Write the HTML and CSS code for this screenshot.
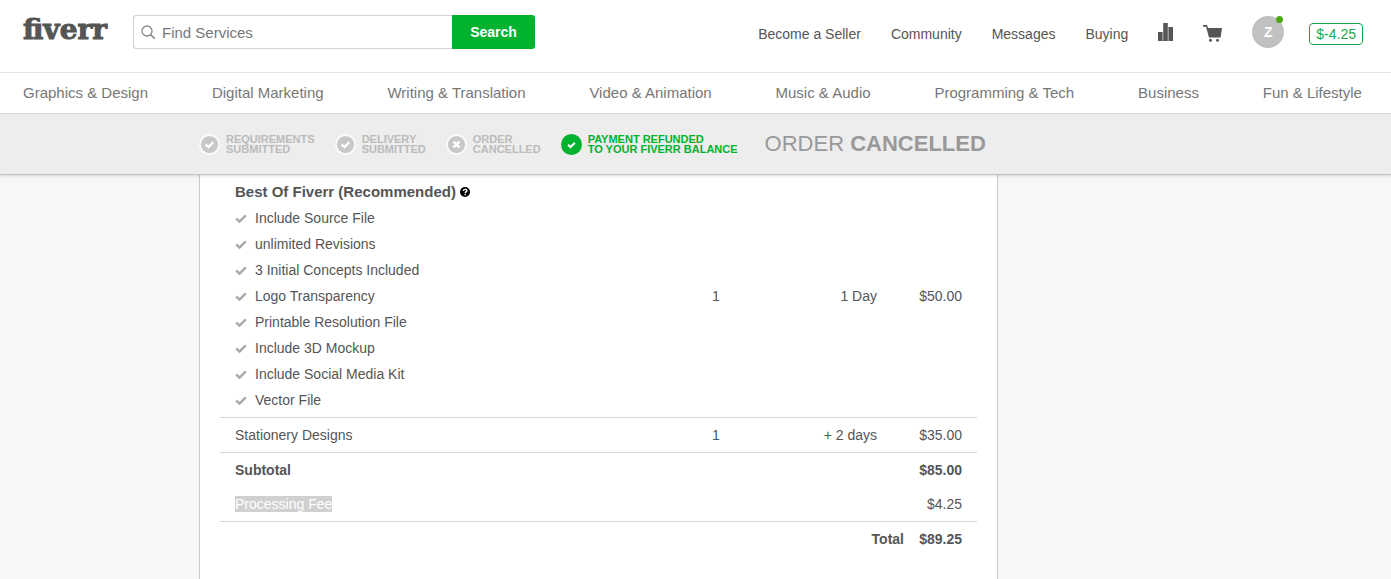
FILE: index.html
```html
<!DOCTYPE html>
<html lang="en">
<head>
    <meta charset="UTF-8">
    <meta name="viewport" content="width=device-width, initial-scale=1.0">
    <title>Fiverr - Order Cancelled</title>
    <link rel="stylesheet" href="styles.css">
</head>
<body>
    <!-- Shared icons -->
    <svg class="icon-defs" aria-hidden="true">
        <symbol id="tick" viewBox="0 0 12 10">
            <path d="M1.2 5.500l3.300 3.100L10.800 2.300" fill="none" stroke="currentColor" stroke-width="2.500"/>
        </symbol>
        <symbol id="done" viewBox="0 0 20 20">
            <circle cx="10" cy="10" r="10" fill="#fafafa"/>
            <circle cx="10" cy="10" r="8.2" fill="currentColor"/>
            <path d="M6.4 10l2.6 2.5 4.6-4.6" fill="none" stroke="#fff" stroke-width="2.2"/>
        </symbol>
        <symbol id="cancelled" viewBox="0 0 20 20">
            <circle cx="10" cy="10" r="10" fill="#fafafa"/>
            <circle cx="10" cy="10" r="8.2" fill="currentColor"/>
            <path d="M7.2 7.2l5.6 5.6M12.8 7.2l-5.6 5.6" fill="none" stroke="#fff" stroke-width="2.2"/>
        </symbol>
    </svg>

    <header class="header">
        <a href="#" class="logo">fiverr</a>

        <form class="search">
            <label class="search-box">
                <svg class="search-icon" viewBox="0 0 15 15" aria-hidden="true">
                    <circle cx="6" cy="6" r="5" fill="none" stroke="#888" stroke-width="1.3"/>
                    <path d="M9.6 9.6l4.2 4.2" stroke="#888" stroke-width="1.6"/>
                </svg>
                <input type="text" class="search-input" placeholder="Find Services" aria-label="Find Services">
            </label>
            <button type="submit" class="search-button">Search</button>
        </form>

        <nav class="user-nav">
            <a href="#" class="user-link">Become a Seller</a>
            <a href="#" class="user-link">Community</a>
            <a href="#" class="user-link">Messages</a>
            <a href="#" class="user-link">Buying</a>
            <a href="#" class="icon-link" aria-label="Analytics">
                <svg class="icon-bars" viewBox="0 0 15 18" aria-hidden="true">
                    <path d="M0 9h4.6v9H0zM5.2 0h4.6v18H5.2zM10.4 4H15v14h-4.6z" fill="#555"/>
                </svg>
            </a>
            <a href="#" class="icon-link icon-link-cart" aria-label="Cart">
                <svg class="icon-cart" viewBox="0 0 19 17" aria-hidden="true">
                    <path d="M0 0h4l1 3h14l-1.4 9.5H6L3 1.8H0z" fill="#555"/>
                    <circle cx="7.5" cy="15.3" r="1.5" fill="#555"/>
                    <circle cx="14.5" cy="15.3" r="1.5" fill="#555"/>
                </svg>
            </a>
            <a href="#" class="avatar">Z<span class="online-dot"></span></a>
            <a href="#" class="balance">$-4.25</a>
        </nav>
    </header>

    <nav class="categories">
        <a href="#">Graphics &amp; Design</a>
        <a href="#">Digital Marketing</a>
        <a href="#">Writing &amp; Translation</a>
        <a href="#">Video &amp; Animation</a>
        <a href="#">Music &amp; Audio</a>
        <a href="#">Programming &amp; Tech</a>
        <a href="#">Business</a>
        <a href="#">Fun &amp; Lifestyle</a>
    </nav>

    <section class="status-bar">
        <div class="container status">
            <ul class="steps">
                <li class="step"><svg class="step-icon"><use href="#done"/></svg><span>REQUIREMENTS<br>SUBMITTED</span></li>
                <li class="step"><svg class="step-icon"><use href="#done"/></svg><span>DELIVERY<br>SUBMITTED</span></li>
                <li class="step"><svg class="step-icon"><use href="#cancelled"/></svg><span>ORDER<br>CANCELLED</span></li>
                <li class="step current">
                    <svg class="step-icon" viewBox="0 0 22 22">
                        <circle cx="11" cy="11" r="11" fill="#00b22d"/>
                        <path d="M7.4 11.2l2.5 2.4 4.6-4.4" fill="none" stroke="#fff" stroke-width="2.2"/>
                    </svg>
                    <span>PAYMENT REFUNDED<br>TO YOUR FIVERR BALANCE</span>
                </li>
            </ul>
            <h1 class="status-title">ORDER <b>CANCELLED</b></h1>
        </div>
    </section>

    <main class="container">
        <div class="order">
            <table class="order-table">
                <colgroup>
                    <col>
                    <col class="col-qty">
                    <col class="col-duration">
                    <col class="col-price">
                </colgroup>
                <tbody>
                    <tr class="package">
                        <td>
                            <h2 class="package-title">
                                Best Of Fiverr (Recommended)
                                <svg class="icon-help" viewBox="0 0 10 10" aria-hidden="true">
                                    <circle cx="5" cy="5" r="5" fill="#000"/>
                                    <path d="M3.2 4c0-2.2 3.7-2.2 3.7-.2C6.9 5 5.2 4.9 5.2 6.2" fill="none" stroke="#fff" stroke-width="1.4"/>
                                    <path d="M4.5 7h1.4v1.3H4.5z" fill="#fff"/>
                                </svg>
                            </h2>
                            <ul class="features">
                                <li><svg class="tick"><use href="#tick"/></svg>Include Source File</li>
                                <li><svg class="tick"><use href="#tick"/></svg>unlimited Revisions</li>
                                <li><svg class="tick"><use href="#tick"/></svg>3 Initial Concepts Included</li>
                                <li><svg class="tick"><use href="#tick"/></svg>Logo Transparency</li>
                                <li><svg class="tick"><use href="#tick"/></svg>Printable Resolution File</li>
                                <li><svg class="tick"><use href="#tick"/></svg>Include 3D Mockup</li>
                                <li><svg class="tick"><use href="#tick"/></svg>Include Social Media Kit</li>
                                <li><svg class="tick"><use href="#tick"/></svg>Vector File</li>
                            </ul>
                        </td>
                        <td class="qty">1</td>
                        <td class="duration">1 Day</td>
                        <td class="price">$50.00</td>
                    </tr>
                    <tr class="lined">
                        <td>Stationery Designs</td>
                        <td class="qty">1</td>
                        <td class="duration">+ 2 days</td>
                        <td class="price">$35.00</td>
                    </tr>
                    <tr class="lined strong">
                        <td colspan="3">Subtotal</td>
                        <td class="price">$85.00</td>
                    </tr>
                    <tr>
                        <td colspan="3"><mark class="selected">Processing Fee</mark></td>
                        <td class="price">$4.25</td>
                    </tr>
                    <tr class="lined strong">
                        <td colspan="3" class="total-label">Total</td>
                        <td class="price">$89.25</td>
                    </tr>
                </tbody>
            </table>
        </div>
    </main>
</body>
</html>
```
FILE: styles.css
```css
* {
    margin: 0;
    padding: 0;
    box-sizing: border-box;
}

body {
    display: flex;
    flex-direction: column;
    min-height: 100vh;
    background-color: #f7f7f7;
    font-family: "Liberation Sans", Arial, sans-serif;
    font-size: 14px;
    color: #555;
}

a {
    color: inherit;
    text-decoration: none;
}

ul {
    list-style: none;
}

.icon-defs {
    display: none;
}

.container {
    width: 100%;
    max-width: 993px;
    margin: 0 auto;
}

/* Header */
.header {
    display: flex;
    align-items: center;
    height: 73px;
    padding: 0 28px 8px 23px;
    background-color: #fff;
    border-bottom: 1px solid #e2e2e2;
}

.logo {
    width: 110px;
    padding-bottom: 4px;
    font-family: "DejaVu Serif", serif;
    font-size: 28px;
    font-weight: bold;
    line-height: 32px;
    -webkit-text-stroke: 1px #555;
}

.search {
    display: flex;
    width: 402px;
    height: 34px;
}

.search-box {
    display: flex;
    flex: 1;
    align-items: center;
    gap: 6px;
    padding-left: 7px;
    border: 1px solid #d3d3d3;
    border-right: none;
    border-radius: 3px 0 0 3px;
}

.search-icon {
    width: 15px;
    height: 15px;
}

.search-input {
    flex: 1;
    min-width: 0;
    border: none;
    outline: none;
    font-family: inherit;
    font-size: 15px;
    color: #777;
}

.search-input::placeholder {
    color: #777;
}

.search-button {
    width: 83px;
    border: none;
    border-radius: 0 3px 3px 0;
    background-color: #00b22d;
    font-family: inherit;
    font-size: 14px;
    font-weight: bold;
    color: #fff;
    cursor: pointer;
}

.user-nav {
    display: flex;
    align-items: center;
    gap: 30px;
    margin-left: auto;
}

.user-link {
    padding-top: 4px;
}

.icon-link {
    display: flex;
}

.icon-link-cart {
    padding-top: 3px;
}

.icon-bars {
    width: 15px;
    height: 18px;
}

.icon-cart {
    width: 19px;
    height: 17px;
}

.avatar {
    position: relative;
    width: 32px;
    height: 32px;
    border-radius: 50%;
    background-color: #c1c1c1;
    font-weight: bold;
    line-height: 32px;
    text-align: center;
    color: #fff;
}

.online-dot {
    position: absolute;
    top: 0;
    right: 1px;
    width: 7px;
    height: 7px;
    border-radius: 50%;
    background-color: #4caa10;
}

.balance {
    margin: 4px 0 0 -5px;
    padding: 0 6px;
    border: 1px solid #18a84a;
    border-radius: 4px;
    line-height: 20px;
    color: #18a84a;
}

/* Categories */
.categories {
    display: flex;
    justify-content: space-between;
    padding: 0 29px 0 23px;
    background-color: #fff;
    border-bottom: 1px solid #dcdcdc;
    font-size: 15px;
    line-height: 40px;
    color: #777;
}

/* Order status */
.status-bar {
    position: relative;
    background-color: #ededed;
    border-bottom: 1px solid #c4c4c4;
    box-shadow: 0 1px 3px rgba(0, 0, 0, 0.15);
}

.status {
    display: flex;
    align-items: center;
    gap: 27px;
    height: 60px;
}

.steps {
    display: flex;
    gap: 20px;
}

.step {
    display: flex;
    align-items: center;
    gap: 6px;
    font-size: 11px;
    font-weight: bold;
    line-height: 10px;
    color: #bbb;
}

.step-icon {
    width: 21px;
    height: 21px;
    color: #c8c8c8;
}

.step.current {
    color: #00b22d;
}

.status-title {
    font-size: 22px;
    font-weight: normal;
    color: #999;
}

/* Order details */
main.container {
    flex: 1;
    display: flex;
}

.order {
    width: 799px;
    padding: 0 20px;
    background-color: #fff;
    border: 1px solid #c8c8c8;
    border-top: none;
    border-bottom: none;
}

.order-table {
    width: 100%;
    table-layout: fixed;
    border-collapse: collapse;
}

.col-qty {
    width: 70px;
}

.col-duration {
    width: 153px;
}

.col-price {
    width: 73px;
}

td {
    height: 34px;
    padding: 0 15px;
    vertical-align: middle;
}

.package td:first-child {
    padding: 4px 15px;
}

.lined td {
    height: 35px;
    border-top: 1px solid #d8d8d8;
}

.qty {
    text-align: center;
}

.duration {
    padding-right: 27px;
    text-align: right;
}

.price {
    padding-left: 0;
    text-align: right;
}

.strong {
    font-weight: bold;
}

.total-label {
    padding-right: 0;
    text-align: right;
}

.package-title {
    font-size: 15px;
    line-height: 26px;
}

.icon-help {
    width: 10px;
    height: 10px;
}

.features li {
    display: flex;
    align-items: center;
    gap: 8px;
    line-height: 26px;
}

.tick {
    width: 12px;
    height: 10px;
    color: #aaa;
}

.selected {
    background-color: #d0d0d0;
    color: #fff;
}
```
